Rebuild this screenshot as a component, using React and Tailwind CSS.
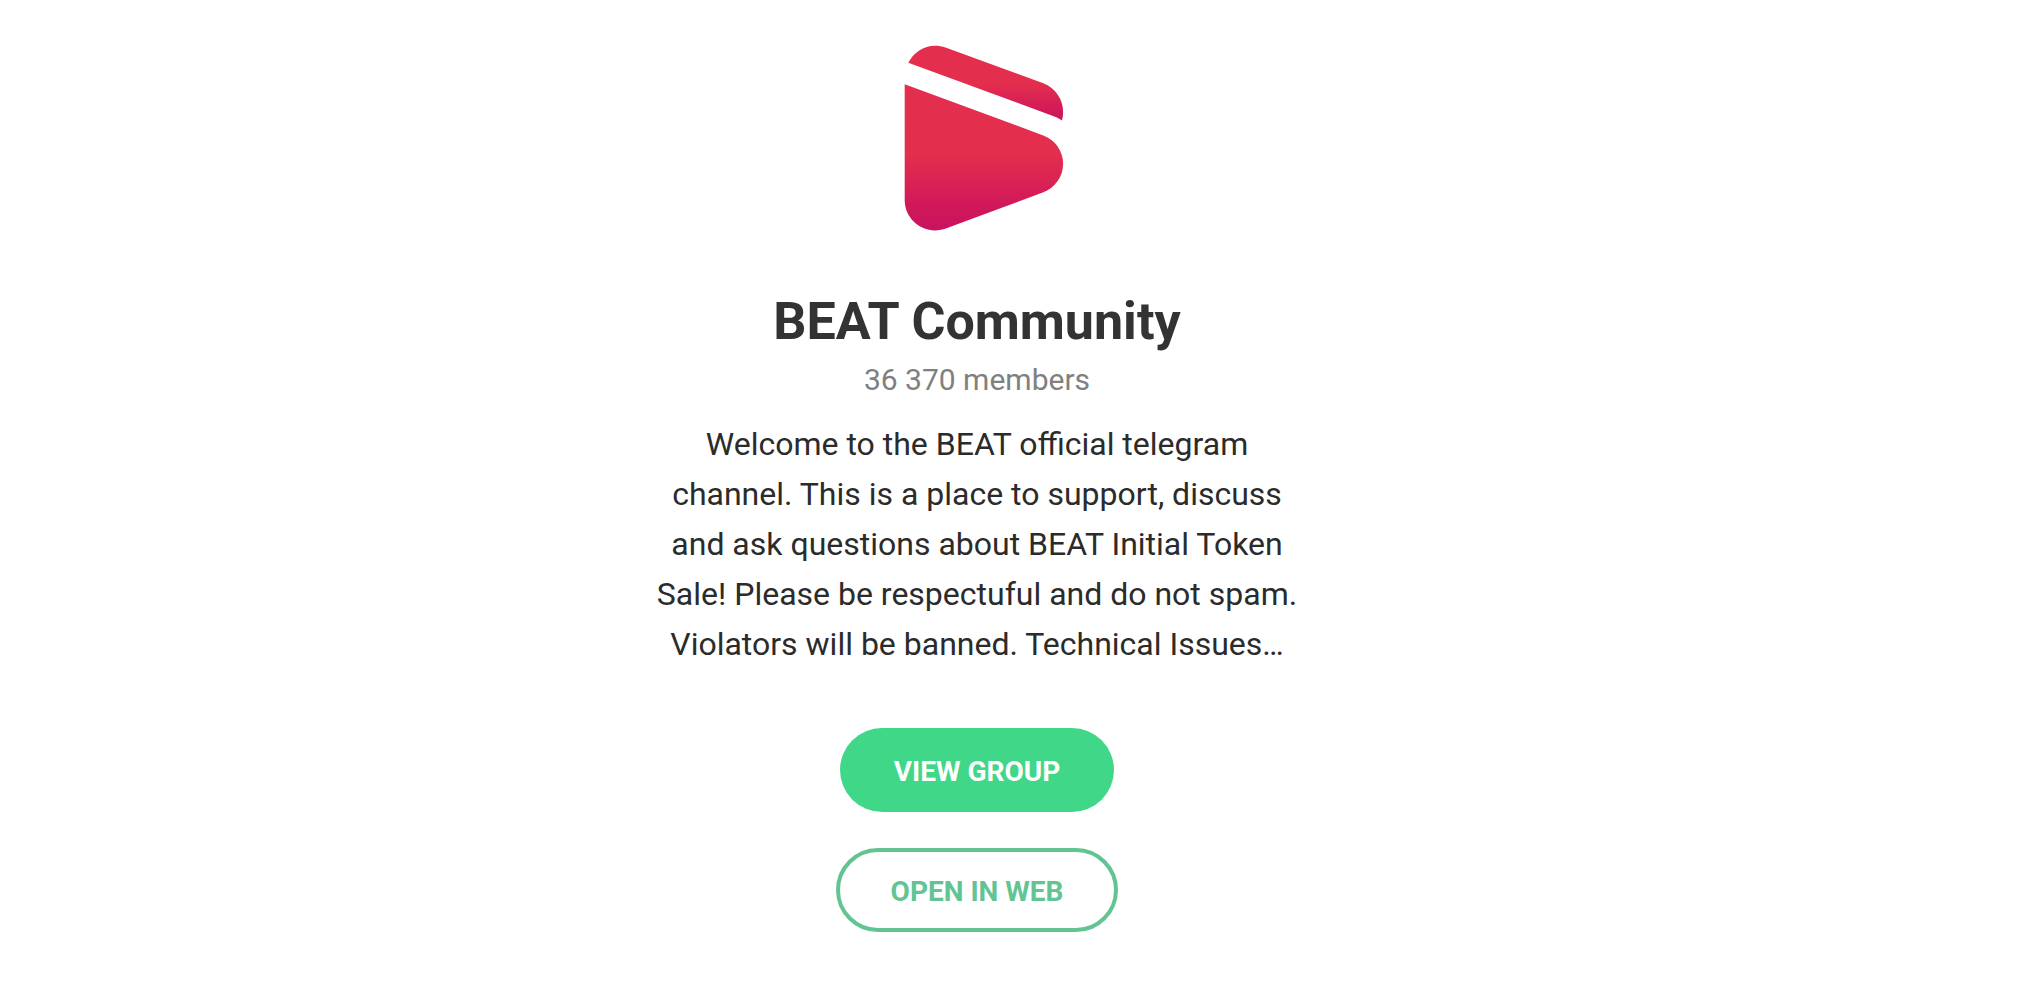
function BeatLogo() {
  return (
    <svg viewBox="0 0 220 220" className="size-[220px]" role="img" aria-label="BEAT">
      <defs>
        <linearGradient id="beat-top" gradientUnits="userSpaceOnUse" x1="0" y1="17" x2="0" y2="92">
          <stop offset="0" stopColor="#e32f4e" />
          <stop offset="0.52" stopColor="#e32e4d" />
          <stop offset="1" stopColor="#cb135e" />
        </linearGradient>
        <linearGradient id="beat-bottom" gradientUnits="userSpaceOnUse" x1="0" y1="56" x2="0" y2="203">
          <stop offset="0" stopColor="#e32f4e" />
          <stop offset="0.48" stopColor="#e32e4d" />
          <stop offset="0.85" stopColor="#cf175b" />
          <stop offset="1" stopColor="#c9135f" />
        </linearGradient>
      </defs>
      <path
        fill="url(#beat-top)"
        d="M41.3 34.8C46.5 24.5 56.5 17.7 68 17.7C71.5 17.7 75 18.2 78.500 19.400L176.300 55.300C188.500 60 196.100 71.500 196.100 83.700C196.100 86.700 195.800 89.600 195 92.500C193 91 190.500 89.600 188 88.700Z"
      />
      <path
        fill="url(#beat-bottom)"
        d="M37.7 56.300L176.300 107.400C188.200 111.900 196.100 123 196.100 135.700C196.100 148.400 188.200 159.700 176.300 164.200L79.500 200.300C75.700 201.700 71.800 202.400 68 202.400C51.500 202.400 37.700 189 37.700 172.300Z"
      />
    </svg>
  );
}

export default function App() {
  return (
    <main className="flex min-h-screen flex-col items-center bg-white pt-7 pr-[66px] pb-12 text-center font-['Roboto',sans-serif]">
      <BeatLogo />
      <h1 className="mt-[42px] text-[52px] leading-[64px] font-bold text-[#333333]">BEAT Community</h1>
      <p className="mt-[11px] text-[30px] leading-[30px] text-[#808080]">36 370 members</p>
      <p className="mt-6 w-[660px] max-w-full text-[32px] leading-[50px] text-[#2b2b2b]">
        Welcome to the BEAT official telegram channel. This is a place to support, discuss and ask
        questions about BEAT Initial Token Sale! Please be respectuful and do not spam. Violators
        will be banned. Technical Issues…
      </p>
      <a
        href="#group"
        className="mt-[59px] flex h-[84px] w-[274px] items-center justify-center rounded-full bg-[#40d788] pt-1 text-[28px] leading-[40px] font-bold text-white"
      >
        VIEW GROUP
      </a>
      <a
        href="#web"
        className="mt-9 flex h-[84px] w-[282px] items-center justify-center rounded-full border-4 border-[#62c493] pt-1 text-[28px] leading-[40px] font-bold text-[#62c493]"
      >
        OPEN IN WEB
      </a>
    </main>
  );
}
